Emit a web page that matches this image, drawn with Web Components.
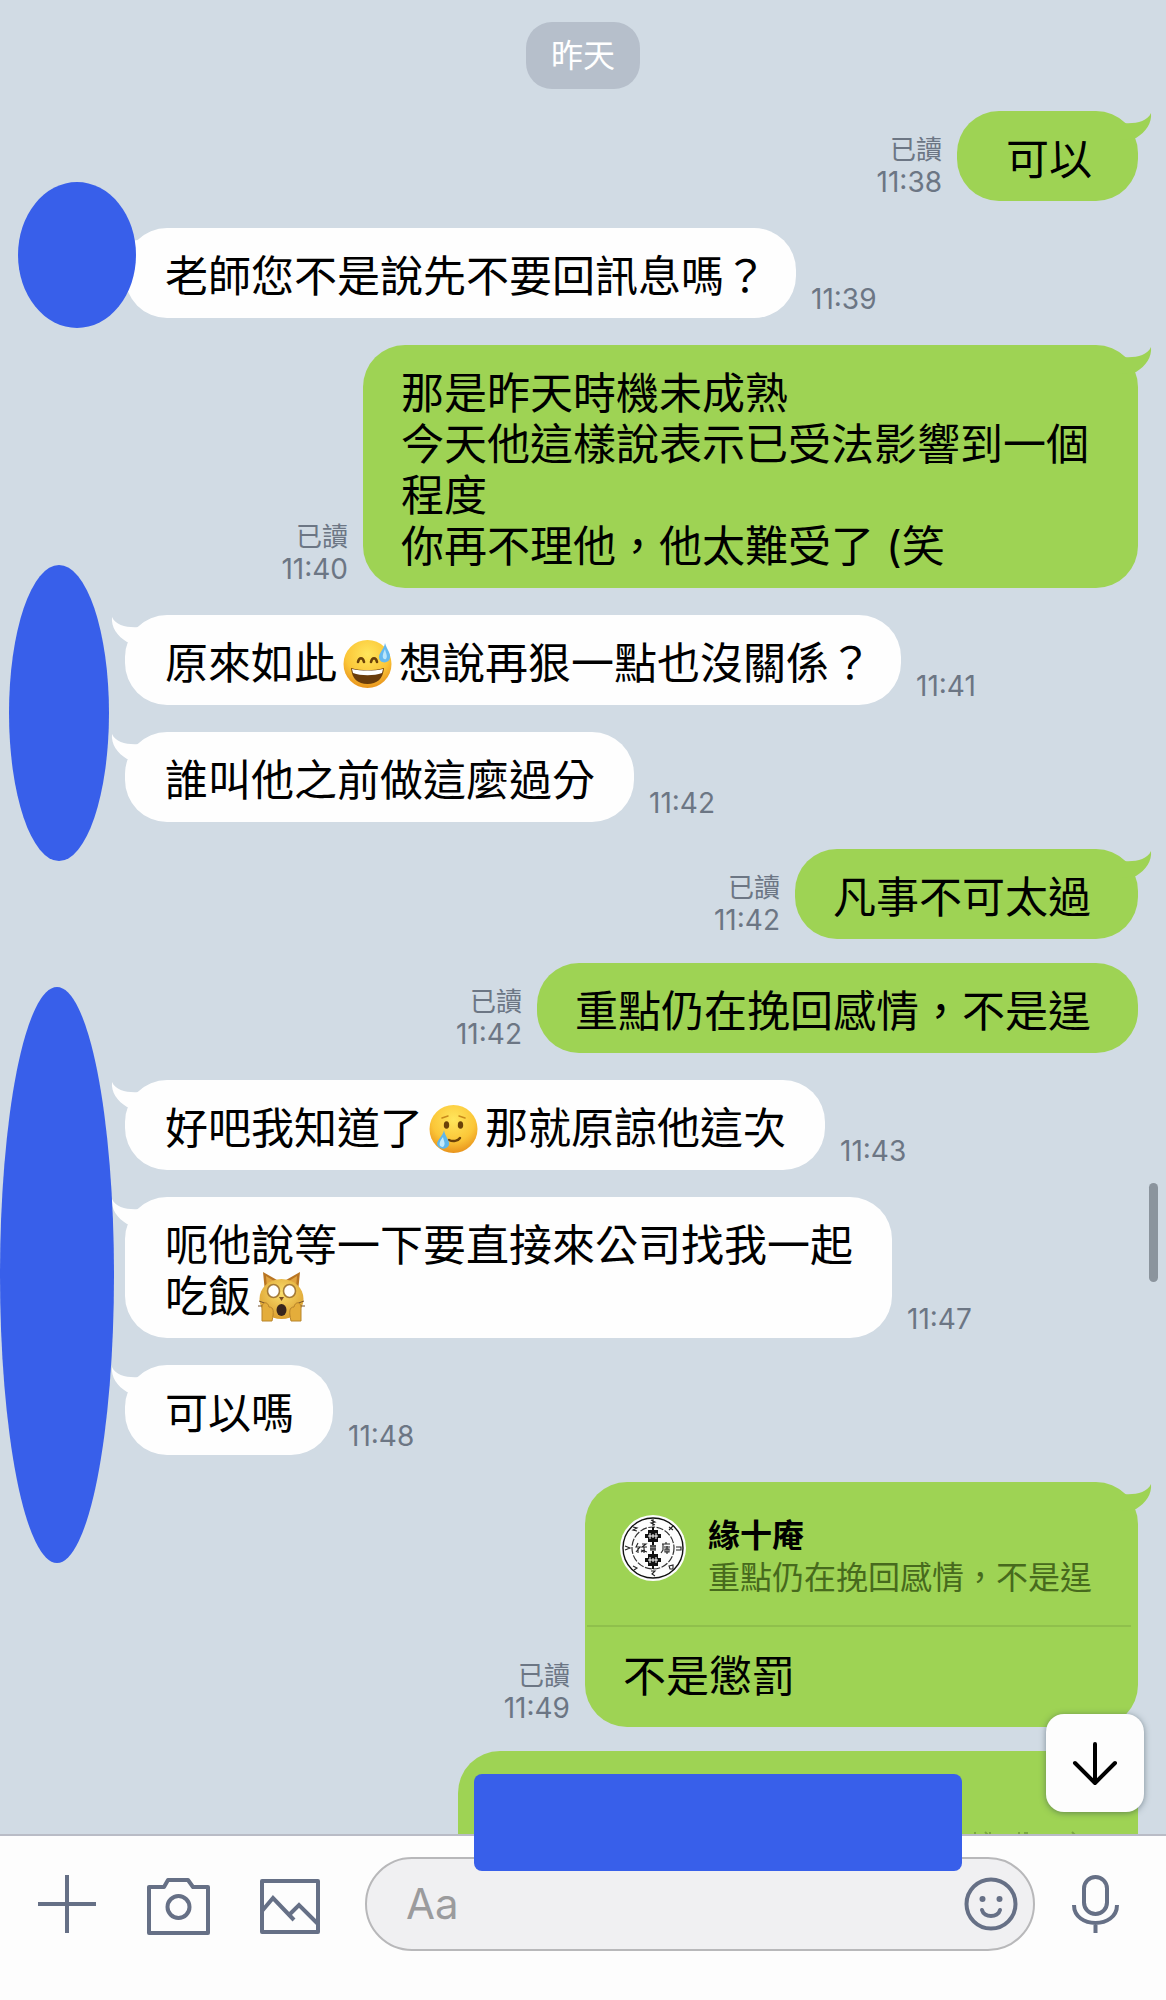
<!DOCTYPE html>
<html lang="zh-Hant">
<head>
<meta charset="utf-8">
<meta name="viewport" content="width=device-width, initial-scale=1">
<title>聊天</title>
<style>
  body { margin: 0; font-family: Inter, "Noto Sans CJK TC", sans-serif; color: #000; background: #d1dbe4; }
</style>
</head>
<body>
<chat-app>
  <chat-date>昨天</chat-date>
  <chat-message side="out" tail short time="11:38">可以</chat-message>
  <chat-message side="in" tail time="11:39">老師您不是說先不要回訊息嗎<chat-mark>？</chat-mark></chat-message>
  <chat-message side="out" tail time="11:40">那是昨天時機未成熟<br>今天他這樣說表示已受法影響到一個程度<br>你再不理他，他太難受了 (笑</chat-message>
  <chat-message side="in" tail time="11:41">原來如此<chat-emoji name="sweat"></chat-emoji>想說再狠一點也沒關係<chat-mark>？</chat-mark></chat-message>
  <chat-message side="in" tail time="11:42">誰叫他之前做這麼過分</chat-message>
  <chat-message side="out" tail time="11:42">凡事不可太過</chat-message>
  <chat-message side="out" time="11:42">重點仍在挽回感情，不是逞</chat-message>
  <chat-message side="in" tail time="11:43">好吧我知道了<chat-emoji name="tear"></chat-emoji>那就原諒他這次</chat-message>
  <chat-message side="in" tail time="11:47">呃他說等一下要直接來公司找我一起<br>吃飯<chat-emoji name="cat"></chat-emoji></chat-message>
  <chat-message side="in" tail time="11:48">可以嗎</chat-message>
  <chat-message side="out" tail time="11:49">
    <chat-quote slot="quote" name="緣十庵">重點仍在挽回感情，不是逞</chat-quote>不是懲罰</chat-message>
  <chat-pending></chat-pending>
  <chat-cover style="--x:18px;--y:182px;--w:118px;--h:146px"></chat-cover>
  <chat-cover style="--x:9px;--y:565px;--w:100px;--h:296px"></chat-cover>
  <chat-cover style="--x:0px;--y:987px;--w:114px;--h:576px"></chat-cover>
  <chat-cover slot="over" style="--x:474px;--y:1774px;--w:488px;--h:97px;--r:8px"></chat-cover>
  <chat-composer slot="composer"></chat-composer>
</chat-app>

<script>
const define = (name, html, setup) => customElements.define(name, class extends HTMLElement {
  connectedCallback() {
    if (this.shadowRoot) return;
    const t = document.createElement('template');
    t.innerHTML = typeof html === 'function' ? html(this) : html;
    this.attachShadow({ mode: 'open' }).append(t.content.cloneNode(true));
    if (setup) setup(this);
  }
});

define('chat-app', `
<style>
  :host { display: flex; flex-direction: column; height: 100vh; position: relative; overflow: hidden; }
  main { flex: 1; min-height: 0; position: relative; overflow: hidden; }
  .list { display: flex; flex-direction: column; padding-top: 22px; }
  .thumb { position: absolute; right: 8px; top: 1183px; width: 9px; height: 99px; border-radius: 5px; background: #8b949d; }
  .down { position: absolute; right: 22px; bottom: 22px; width: 98px; height: 98px; padding: 0; border: 0; border-radius: 18px;
    background: #fdfdfd; box-shadow: 0 1px 6px rgba(40,60,70,.5); }
  .down svg { display: block; width: 98px; height: 98px; }
</style>
<main>
  <div class="list"><slot></slot></div>
  <div class="thumb"></div>
  <button class="down" aria-label="捲動到底部"><svg viewBox="0 0 98 98" fill="none" stroke="#000" stroke-width="4" stroke-linecap="round" stroke-linejoin="round"><path d="M49 30V68M29 49L49 69L69 49"/></svg></button>
</main>
<slot name="composer"></slot>
<slot name="over"></slot>`);

define('chat-date', `
<style>
  :host { display: flex; justify-content: center; margin-bottom: 22px; }
  span { padding: 11px 25px 10px; border-radius: 26px; background: #b6bfcb; color: #fff; font-size: 32px; line-height: 46px; }
</style>
<span><slot></slot></span>`);

define('chat-message', el => `
<style>
  :host { display: flex; align-items: flex-end; gap: 15px; margin-bottom: 27px; }
  :host([side="in"]) { padding: 0 28px 0 125px; }
  :host([side="out"]) { flex-direction: row-reverse; padding: 0 28px; }
  .bubble { position: relative; border-radius: 42px; font-size: 43px; line-height: 51px; }
  :host([side="in"]) .bubble { max-width: 778px; background: #fefefe; }
  :host([side="out"]) .bubble { max-width: 775px; background: #9ed354; }
  .text { padding: 23px 39px 16px 40px; }
  :host([side="out"]) .text { padding-left: 38px; padding-right: 47px; }
  :host([side="out"][short]) .text { padding-left: 49px; padding-right: 46px; }
  .quoted .text { padding-top: 26px; padding-bottom: 25px; }
  .tail { position: absolute; top: 0; width: 32px; height: 30px; display: none; }
  :host([tail]) .tail { display: block; }
  :host([side="out"]) .tail { right: -14px; fill: #9ed354; }
  :host([side="in"]) .tail { left: -14px; fill: #fefefe; transform: scaleX(-1); }
  .meta { flex: none; display: flex; flex-direction: column; padding-bottom: 3px; color: #6c7684; font-size: 26px; line-height: 32px; }
  time { font-size: 28px; }
  :host([side="out"]) .meta { align-items: flex-end; }
</style>
<div class="bubble${el.querySelector('[slot=quote]') ? ' quoted' : ''}">
  <slot name="quote"></slot>
  <div class="text"><slot></slot></div>
  <svg class="tail" viewBox="0 0 32 30"><path d="M0 8L3 12C15 13 27 11 31 2C32 12 26 21 16 27L0 29Z"/></svg>
</div>
<div class="meta">${el.getAttribute('side') === 'out' ? '<span>已讀</span>' : ''}<time>${el.getAttribute('time')}</time></div>`,
el => {
  // Consecutive bubbles of one's own sit closer together.
  const next = el.nextElementSibling;
  if (el.getAttribute('side') === 'out' && next && (next.getAttribute('side') === 'out' || next.localName === 'chat-pending')) el.style.marginBottom = '24px';
});

define('chat-mark', `<style>:host { display: inline-block; margin-right: -10px; }</style><slot></slot>`);

define('chat-quote', el => `
<style>
  :host { display: flex; gap: 22px; padding: 33px 46px 26px 35px; font-size: 32px; line-height: 42px; position: relative; }
  :host::after { content: ""; position: absolute; left: 2px; right: 7px; bottom: -2px; height: 2px; background: #8fc04c; }
  svg { flex: none; width: 66px; height: 66px; }
  .name { font-weight: 700; }
  .body { color: #476a1d; }
</style>
<svg viewBox="-33 -33 66 66" aria-hidden="true">
  <circle r="33" fill="#fdfdfd"/>
  <circle r="30" fill="none" stroke="#111" stroke-width="1.4"/>
  <circle r="21" fill="none" stroke="#333" stroke-width="1.2" stroke-dasharray="7 1.5"/>
  <g fill="#111"><path d="M-5-18H-1V-21H1V-18H5V-14H8V-10H5V-6H1V-3H-1V-6H-5V-10H-8V-14H-5Z"/><path d="M-3-15V-9M-5-12H5M3-15V-9M0-14V-10" stroke="#fff" fill="none"/></g>
  <g fill="#111" transform="scale(1 -1)"><path d="M-5-18H-1V-21H1V-18H5V-14H8V-10H5V-6H1V-3H-1V-6H-5V-10H-8V-14H-5Z"/><path d="M-3-15V-9M-5-12H5M3-15V-9M0-14V-10" stroke="#fff" fill="none"/></g>
  <g fill="none" stroke="#222" stroke-width="1.1">
    <path d="M-15-5L-17-1L-13-1L-17 4M-15 0V5M-11-4H-7L-11-1H-6M-9-1V5M-12 2L-6 4M-12 4L-8 2"/>
    <path d="M-3-2H3M-3 1H3M-2-3V3M2-3V3M0-3V3"/>
    <path d="M9-4H17M13-6V-4M10-4V2L8 5M11-1H17M12 1H16V4H12ZM14-2V6"/>
    <path d="M-2-28L2-26L-2-25L2-23M0-29V-22M16-21L20-18M20-22L16-18M-20-21L-16-20L-20-18L-16-17M-28-2L-23 0L-28 2M23-1H28V2H23M-20 18L-16 20L-19 22M16 18L20 17V21H17ZM-2 23H2L-1 26L2 28"/>
  </g>
</svg>
<div><div class="name">${el.getAttribute('name')}</div><div class="body"><slot></slot></div></div>`);

define('chat-pending', `
<style>
  :host { display: flex; justify-content: flex-end; padding: 0 28px; }
  div { width: 680px; height: 240px; border-radius: 42px; background: #9ed354; }
  svg { display: block; width: 680px; height: 84px; }
</style>
<div><svg viewBox="0 0 680 84" stroke="#7ba83f" stroke-width="2"><path d="M517 81V84M527 81L530 84M532 81V84M561 81V84M566 82H570M614 81L617 84"/></svg></div>`);

define('chat-cover', `
<style>
  :host { display: block; position: absolute; left: var(--x); top: var(--y); width: var(--w); height: var(--h);
    border-radius: var(--r, 50%); background: #385fea; }
</style>`);

const emoji = {
  sweat: `<circle cx="24.5" cy="25" r="24" fill="url(#g)"/>
    <path d="M15 23c1-5 5-5 6 0M28 23c1-5 5-5 6 0" fill="none" stroke="#6b4108" stroke-width="2.6" stroke-linecap="round"/>
    <path d="M8 29C18 32 31 32 41 29C40 40 34 45 24.500 45S9 40 8 29Z" fill="#6a3c0b"/>
    <path d="M9 30C18 32 31 32 40 30L39 34C31 37 18 37 10 34Z" fill="#fff"/>
    <path d="M42 4C44 11 48 14 47 19C46 25 36 25 36 18C36 14 41 10 42 4Z" fill="#66b9ef"/><path d="M42 10C43 15 45 17 43 20C40 21 38 18 42 10Z" fill="#b9e5fb"/>`,
  tear: `<circle cx="24.5" cy="25" r="24" fill="url(#g)"/>
    <ellipse cx="17.500" cy="21" rx="2.700" ry="3.800" fill="#6b4108"/><ellipse cx="31.500" cy="21" rx="2.700" ry="3.800" fill="#6b4108"/>
    <path d="M13 14l6-2M30 12l6 2" stroke="#c98a1c" stroke-width="1.500" stroke-linecap="round"/>
    <path d="M20 36C24 38 29 37 31 34" fill="none" stroke="#6b4108" stroke-width="2.400" stroke-linecap="round"/>
    <path d="M15 26C16 33 21 36 20 41C18 46 9 46 8 40C8 36 14 32 15 26Z" fill="#5fb7ea"/><path d="M14 33C15 38 17 40 14 43C10 43 9 39 14 33Z" fill="#c2eafa"/>`,
  cat: `<path d="M6 0L20 8L8 20ZM43 0L29 8L41 20Z" fill="#b97522"/><path d="M9 4L17 9L10 16ZM40 4L32 9L39 16Z" fill="#e0a440"/>
    <ellipse cx="24.500" cy="27" rx="22" ry="20" fill="url(#g2)"/>
    <ellipse cx="16.500" cy="19" rx="6" ry="6.500" fill="#fff" stroke="#a57b38" stroke-width="1.600"/><ellipse cx="32.500" cy="19" rx="6" ry="6.500" fill="#fff" stroke="#a57b38" stroke-width="1.600"/>
    <path d="M22 25H27L24.500 29Z" fill="#7a4b22"/><path d="M2 29L10 32M1 34L9 34M47 29L39 32M48 34L40 34" stroke="#75522a" stroke-width="1"/>
    <ellipse cx="24.500" cy="38" rx="5" ry="6" fill="#38251d"/>
    <path d="M5 49V38C4 29 11 29 12 35C17 35 17 40 15 49ZM44 49V38C45 29 38 29 37 35C32 35 32 40 34 49Z" fill="#e4ad3b" stroke="#b8842b"/>`
};
define('chat-emoji', el => `
<style>
  :host { display: inline-block; width: 49px; height: 50px; margin: -6px 7px -6px 6px; vertical-align: -4px; }
  svg { display: block; width: 49px; height: 50px; overflow: visible; }
</style>
<svg viewBox="0 0 49 50" aria-hidden="true">
  <defs><radialGradient id="g" cx=".5" cy=".3" r=".75"><stop offset="0" stop-color="#ffe65c"/><stop offset=".6" stop-color="#fbc638"/><stop offset="1" stop-color="#e58a17"/></radialGradient>
  <radialGradient id="g2" cx=".5" cy=".35" r=".7"><stop offset="0" stop-color="#fade6c"/><stop offset="1" stop-color="#d99a2b"/></radialGradient></defs>
  ${emoji[el.getAttribute('name')]}
</svg>`);

define('chat-composer', `
<style>
  :host { display: flex; align-items: flex-start; height: 143px; padding: 21px 36px 0 32px; border-top: 2px solid #b9bcc6; background: #fdfdfd; }
  button { flex: none; display: flex; align-items: center; justify-content: center; width: 70px; height: 94px; padding: 0; border: 0; background: none; }
  .tools { display: flex; gap: 41px; margin-right: 41px; }
  svg { display: block; width: 70px; height: 70px; fill: none; stroke: #667086; stroke-width: 4; }
  .field { flex: 1; min-width: 0; box-sizing: border-box; display: flex; align-items: center; height: 94px; padding: 0 7px 0 39px; border: 2px solid #b8b8ba; border-radius: 47px; background: #f0f0f2; }
  input { flex: 1; min-width: 0; padding: 0; border: 0; outline: 0; background: none; font: 42px/50px Inter, "Noto Sans CJK TC", sans-serif; color: #000; }
  input::placeholder { color: #9b9b9d; opacity: 1; }
  .mic { margin-left: 25px; }
</style>
<div class="tools">
  <button aria-label="新增"><svg viewBox="0 0 70 70"><path d="M35 6V64M6 35H64"/></svg></button>
  <button aria-label="相機"><svg viewBox="0 0 70 70" stroke-linejoin="round"><path d="M6 18H21L25 11H45L50 18H65V64H6Z"/><circle cx="35.500" cy="38" r="11"/></svg></button>
  <button aria-label="相片"><svg viewBox="0 0 70 70" stroke-linejoin="miter"><path d="M8 12H64V63H8Z" stroke-linejoin="round"/><path d="M8 42L19 29L40 51M35 46L45 36L64 55"/></svg></button>
</div>
<div class="field">
  <input type="text" aria-label="輸入訊息" placeholder="Aa">
  <button aria-label="表情"><svg viewBox="0 0 70 70"><circle cx="35" cy="35" r="24.500"/><path d="M26 41C28 49 42 49 44 41" stroke-linecap="round"/><g fill="#667086" stroke="none"><circle cx="26.500" cy="30" r="3"/><circle cx="43.500" cy="30" r="3"/></g></svg></button>
</div>
<button class="mic" aria-label="語音"><svg viewBox="0 0 70 70"><rect x="24" y="8" width="23" height="37" rx="11.500"/><path d="M14 36C14 60 57 60 57 36M35.500 54V64"/></svg></button>`);
</script>
</body>
</html>
